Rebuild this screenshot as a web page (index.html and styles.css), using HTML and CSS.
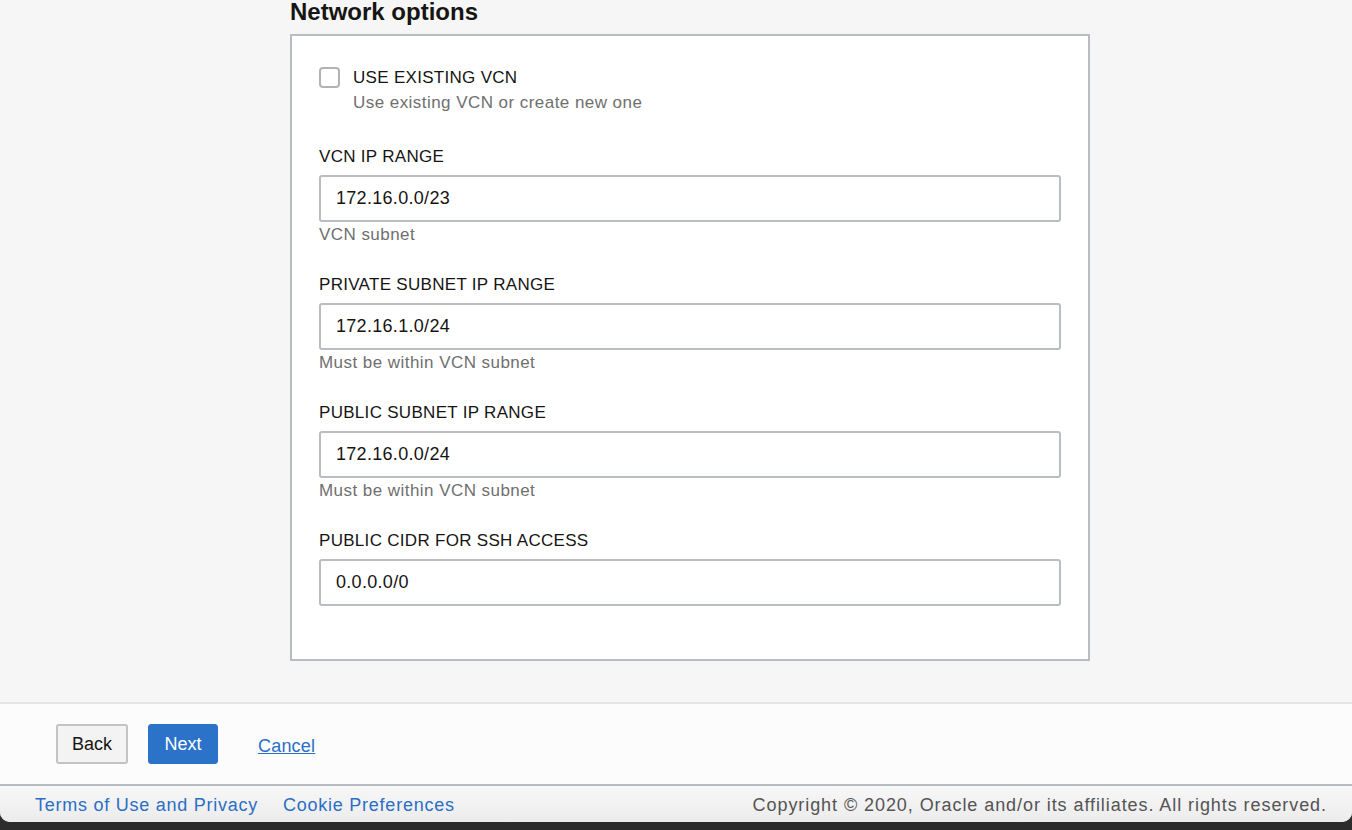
FILE: index.html
```html
<!DOCTYPE html>
<html lang="en">
<head>
<meta charset="utf-8">
<title>Network options</title>
<link rel="stylesheet" href="styles.css">
</head>
<body>
<div class="window">
  <main class="content">
    <h2 class="section-title">Network options</h2>
    <section class="panel">
      <div class="check-row">
        <span class="checkbox"></span>
        <div class="check-text">
          <div class="field-label">USE EXISTING VCN</div>
          <div class="help">Use existing VCN or create new one</div>
        </div>
      </div>
      <div class="field">
        <div class="field-label">VCN IP RANGE</div>
        <div class="input">172.16.0.0/23</div>
        <div class="help">VCN subnet</div>
      </div>
      <div class="field">
        <div class="field-label">PRIVATE SUBNET IP RANGE</div>
        <div class="input">172.16.1.0/24</div>
        <div class="help">Must be within VCN subnet</div>
      </div>
      <div class="field">
        <div class="field-label">PUBLIC SUBNET IP RANGE</div>
        <div class="input">172.16.0.0/24</div>
        <div class="help">Must be within VCN subnet</div>
      </div>
      <div class="field">
        <div class="field-label">PUBLIC CIDR FOR SSH ACCESS</div>
        <div class="input">0.0.0.0/0</div>
      </div>
    </section>
  </main>
  <div class="actions">
    <button class="btn btn-secondary">Back</button>
    <button class="btn btn-primary">Next</button>
    <a class="cancel" href="#">Cancel</a>
  </div>
  <footer class="footer">
    <nav class="footer-links">
      <a href="#">Terms of Use and Privacy</a>
      <a href="#">Cookie Preferences</a>
    </nav>
    <div class="copyright">Copyright © 2020, Oracle and/or its affiliates. All rights reserved.</div>
  </footer>
</div>
</body>
</html>
```

FILE: styles.css
```css
* { box-sizing: border-box; }
html, body { margin: 0; padding: 0; }
body {
  background: #2c2c2c;
  font-family: "Liberation Sans", Arial, sans-serif;
  color: #161513;
  height: 830px;
  overflow: hidden;
}
.window {
  height: 822px;
  background: #f6f6f6;
  border-radius: 0 0 10px 10px;
  overflow: hidden;
  display: flex;
  flex-direction: column;
}
.content {
  height: 702px;
  padding-left: 290px;
}
.section-title {
  margin: 0;
  font-size: 24px;
  line-height: 24px;
  font-weight: bold;
  color: #161513;
}
.panel {
  margin-top: 10px;
  width: 800px;
  height: 627px;
  background: #fff;
  border: 2px solid #b9bcc1;
  padding: 31px 27px 0 27px;
}
.check-row {
  display: flex;
  align-items: flex-start;
  gap: 13px;
}
.checkbox {
  width: 21px;
  height: 21px;
  border: 2px solid #b3b3b3;
  border-radius: 4px;
  background: #fff;
  flex: none;
}
.check-text .field-label { margin-bottom: 4px; }
.field-label {
  font-size: 17px;
  line-height: 21px;
  letter-spacing: 0.3px;
  color: #161513;
}
.help {
  font-size: 17px;
  line-height: 21px;
  letter-spacing: 0.45px;
  color: #6f6f6f;
}
.field { margin-top: 33px; }
.field .field-label { margin-bottom: 8px; }
.input {
  height: 47px;
  border: 2px solid #b9bcc1;
  border-radius: 3px;
  padding: 0 15px;
  font-size: 18px;
  letter-spacing: 0.3px;
  line-height: 43px;
  color: #161513;
}
.field .help { margin-top: 2px; }
.field + .field { margin-top: 29px; }
.actions {
  height: 84px;
  background: #fcfcfc;
  border-top: 2px solid #e5e5e5;
  border-bottom: 2px solid #b7babe;
  display: flex;
  align-items: center;
  padding: 0 0 0 56px;
}
.btn {
  height: 40px;
  font-family: "Liberation Sans", Arial, sans-serif;
  font-size: 18px;
  border-radius: 3px;
  padding: 0 13px;
}
.btn-secondary {
  width: 72px;
  background: #f3f3f3;
  border: 2px solid #c3c3c3;
  color: #161513;
}
.btn-primary {
  width: 70px;
  margin-left: 20px;
  background: #2b73c9;
  border: 1px solid #2b73c9;
  color: #fff;
}
.cancel {
  margin-left: 40px;
  margin-top: 4px;
  font-size: 18px;
  letter-spacing: 0.2px;
  color: #2a6ec6;
  text-decoration: underline;
}
.footer {
  flex: 1;
  background: linear-gradient(#f7f7f7, #ececec);
  display: flex;
  align-items: center;
  justify-content: space-between;
  padding: 2px 25px 0 35px;
  font-size: 18px;
}
.footer-links { display: flex; gap: 25px; letter-spacing: 0.75px; }
.footer-links a { color: #2b6ec4; text-decoration: none; }
.copyright { color: #545454; letter-spacing: 0.93px; }
```
